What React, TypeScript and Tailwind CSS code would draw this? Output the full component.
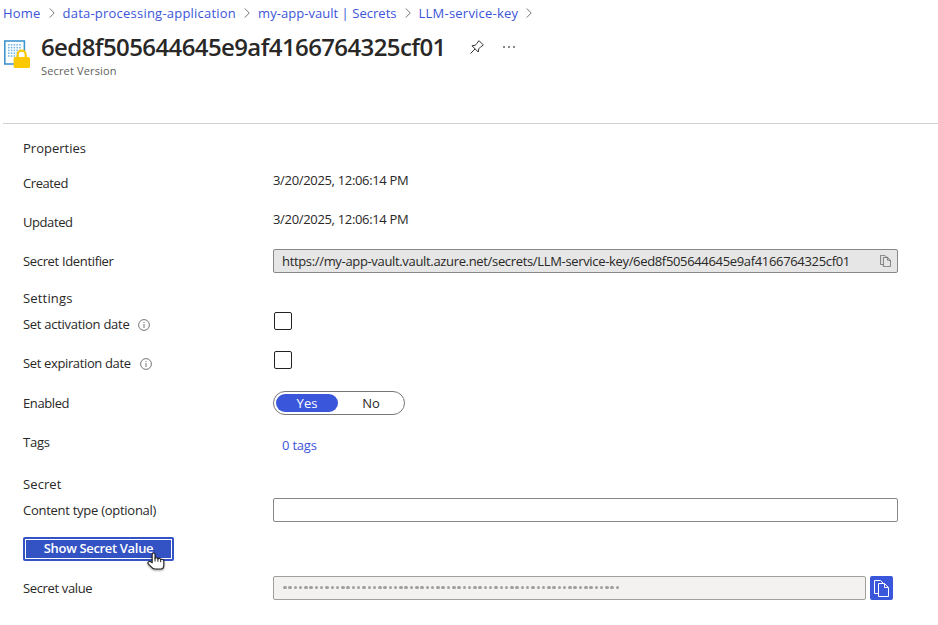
import React from "react";

function T({ children, className = "tracking-[-0.34px]" }: { children: React.ReactNode; className?: string }) {
  return <span className={"whitespace-nowrap " + className}>{children}</span>;
}

function Chevron() {
  return (
    <svg width="6" height="10" viewBox="0 0 6 10" className="mx-2 shrink-0" fill="none" stroke="#767676">
      <path d="M0.8 0.5 5.2 5 0.8 9.5" />
    </svg>
  );
}

function VaultIcon() {
  const dots: [number, number][] = [];
  for (let y = 0; y < 5; y++) for (let x = 0; x < 5; x++) dots.push([x, y]);
  return (
    <svg width="28" height="30" viewBox="0 0 28 30" className="shrink-0">
      <rect x="0.8" y="1" width="19.6" height="23" fill="#fff" stroke="#3d94d1" strokeWidth="1.6" />
      {dots.map(([x, y]) => (
        <rect key={x + "-" + y} x={4 + x * 2.8} y={4 + y * 2.8} width="1.6" height="1.6" fill="#7ab8e8" />
      ))}
      <path d="M13.7 19v-4.3a4 4 0 0 1 8 0V19" fill="#fff" stroke="#fcc900" strokeWidth="2.2" />
      <rect x="9.6" y="17" width="16.4" height="11" rx="1.6" fill="#fcc900" />
    </svg>
  );
}

function Pin() {
  return (
    <svg width="14" height="14" viewBox="0 0 14 14" fill="none" stroke="#333" className="shrink-0">
      <path d="M9.2 0.8 13.2 4.8 12.2 6.2 11 6.5 8.8 8.8 8.2 12 2 5.8 5.2 5.2 7.5 3 7.8 1.8ZM5.1 8.9 0.5 13.5" />
    </svg>
  );
}

function Copy({ width, height, className }: { width: number; height: number; className: string }) {
  return (
    <svg width={width} height={height} viewBox="0 0 15 17" fill="none" stroke="currentColor" className={"shrink-0 " + className}>
      <path d="M4.5 13.5H0.5V0.5H6.5L9.5 3.5" />
      <path d="M4.5 3.5H10.5L14.5 7.5V16.5H4.5ZM10.5 3.5V7.5H14.5" />
    </svg>
  );
}

function Info() {
  return (
    <svg width="12" height="12" viewBox="0 0 12 12" fill="none" stroke="#666" className="mt-[2px] ml-[9px] shrink-0">
      <circle cx="6" cy="6" r="5.4" strokeWidth="0.9" />
      <path d="M6 5v4M6 3v1" strokeWidth="0.9" />
    </svg>
  );
}

function Hand() {
  return (
    <svg width="19" height="19" viewBox="0 0 19 19" className="absolute top-[15px] left-[124px] drop-shadow-[0_1px_1px_rgba(0,0,0,0.4)]">
      <path
        d="M5.2 10.8V2.4C5.2 0.5 8 0.5 8 2.4V6.6C8.6 5.4 10.6 5.6 10.9 7 11.7 6 13.4 6.3 13.7 7.6 15 6.9 16.8 7.6 16.8 9.2V13C16.8 15.6 15.6 17 13.8 17H7.8C5 17 3.8 14 1.4 12 0.2 10.6 1.5 9.1 3.1 9.6Z"
        fill="#fff" stroke="#222" strokeWidth="1.1" strokeLinejoin="round"
      />
      <path d="M8 6.5V9.2M10.9 7V9.4M13.7 7.6V9.8" fill="none" stroke="#222" strokeWidth="1" strokeLinecap="round" />
    </svg>
  );
}

function Row({ label, children, className = "" }: { label: React.ReactNode; children?: React.ReactNode; className?: string }) {
  return (
    <div className={"flex h-[30px] items-center " + className}>
      <div className="flex w-[250px] shrink-0 items-center">{label}</div>
      {children}
    </div>
  );
}

export default function App() {
  return (
    <div className="h-[625px] w-[938px] overflow-hidden bg-white font-['Open_Sans','Noto_Sans',sans-serif] text-[13px] leading-5 text-[#292827]">
      <nav className="flex h-[26px] items-center pl-[3px] text-[#3b55d9]">
        <T className="tracking-[0.2px]">Home</T>
        <Chevron />
        <T className="tracking-[0.22px]">data-processing-application</T>
        <Chevron />
        <T className="tracking-[0.04px]">my-app-vault | Secrets</T>
        <Chevron />
        <T className="tracking-[0.22px]">LLM-service-key</T>
        <Chevron />
      </nav>
      <header className="ml-[3px] flex h-[98px] border-b border-[#d2d0ce]">
        <div className="mt-[14px] ml-[1px]">
          <VaultIcon />
        </div>
        <div className="ml-[9px]">
          <div className="flex h-[41px] items-center">
            <h1 className="text-2xl font-semibold tracking-[-0.6px] whitespace-nowrap">6ed8f505644645e9af4166764325cf01</h1>
            <div className="ml-[24px]">
              <Pin />
            </div>
            <div className="ml-[19px] flex gap-[3px]">
              <i className="size-[2px] bg-[#888]" />
              <i className="size-[2px] bg-[#888]" />
              <i className="size-[2px] bg-[#888]" />
            </div>
          </div>
          <div className="-mt-[6px] text-[11px] tracking-[0.15px] text-[#605e5c]">Secret Version</div>
        </div>
      </header>
      <main className="pt-[14px] pl-[23px]">
        <h2>Properties</h2>
        <Row className="mt-[10px]" label={<T className="tracking-[-0.42px]">Created</T>}>
          <div className="pb-[6px] tracking-[-0.33px]">3/20/2025, 12:06:14 PM</div>
        </Row>
        <Row className="mt-[9px]" label={<T className="tracking-[-0.42px]">Updated</T>}>
          <div className="pb-[6px] tracking-[-0.33px]">3/20/2025, 12:06:14 PM</div>
        </Row>
        <Row className="mt-[9px]" label={<T>Secret Identifier</T>}>
          <div className="flex h-6 w-[625px] items-center justify-between rounded-[2px] border border-[#8a8886] bg-[#e6e6e6] pr-[6px] pl-2">
            <T className="tracking-[-0.335px]">
              https://my-app-vault.vault.azure.net/secrets/LLM-service-key/6ed8f505644645e9af4166764325cf01
            </T>
            <Copy width={11} height={12} className="text-[#555]" />
          </div>
        </Row>
        <h2 className="mt-[12px] tracking-[0.17px]">Settings</h2>
        <Row className="mt-[1px]" label={<><T className="tracking-[-0.28px]">Set activation date</T><Info /></>}>
          <div className="mt-[-6px] ml-[1px] size-[18px] rounded-[2px] border border-[#222]" />
        </Row>
        <Row className="mt-[9px]" label={<><T className="tracking-[-0.36px]">Set expiration date</T><Info /></>}>
          <div className="mt-[-6px] ml-[1px] size-[18px] rounded-[2px] border border-[#222]" />
        </Row>
        <Row className="mt-[10px]" label={<T className="tracking-[-0.4px]">Enabled</T>}>
          <div className="flex h-6 w-[132px] items-center rounded-full border border-[#767676] px-[2px]">
            <div className="flex h-[18px] w-[62px] items-center justify-center rounded-full bg-[#3a57db] text-white">Yes</div>
            <div className="flex-1 pl-[2px] text-center">No</div>
          </div>
        </Row>
        <Row className="mt-[9px]" label={<T className="tracking-[-0.25px]">Tags</T>}>
          <div className="mt-[6px] pl-[9px] tracking-[-0.2px] text-[#3b55d9]">0 tags</div>
        </Row>
        <h2 className="mt-[17px] tracking-[0.1px]">Secret</h2>
        <Row className="mt-[1px]" label={<T className="tracking-[-0.27px]">Content type (optional)</T>}>
          <div className="h-6 w-[625px] rounded-[2px] border border-[#8a8886] bg-white" />
        </Row>
        <div className="relative mt-[12px] h-6 w-[151px] rounded-[2px] bg-[#3352c4] p-[2px]">
          <button className="flex h-5 w-full items-center justify-center border border-white pb-[2px] font-semibold tracking-[-0.33px] whitespace-nowrap text-white">
            Show Secret Value
          </button>
          <Hand />
        </div>
        <Row className="mt-[12px]" label={<T className="tracking-[-0.36px]">Secret value</T>}>
          <div className="flex h-6 w-[593px] items-center rounded-[2px] border border-[#a19f9d] bg-[#f3f2f1] pl-[9px]">
            <div className="mb-[1px] flex gap-[1.79px]">
              {Array.from({ length: 64 }, (_, i) => (
                <i key={i} className="size-[3.5px] shrink-0 rounded-full bg-[#a19f9d]" />
              ))}
            </div>
          </div>
          <div className="ml-1 flex h-6 w-[23px] items-center justify-center rounded-[2px] bg-[#3a57db]">
            <Copy width={15} height={17} className="text-white" />
          </div>
        </Row>
      </main>
    </div>
  );
}
